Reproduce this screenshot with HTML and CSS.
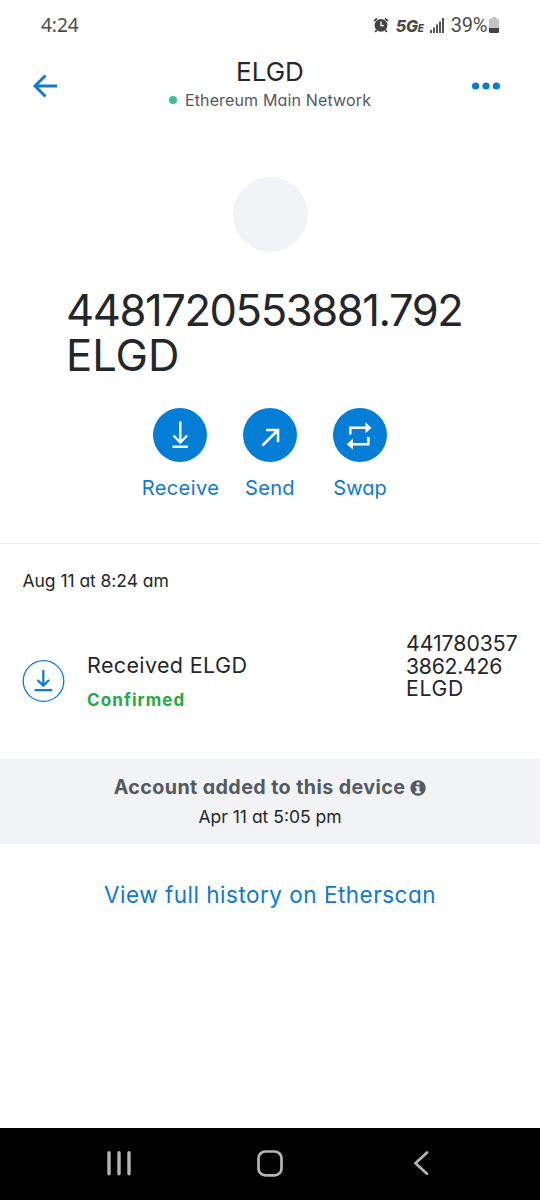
FILE: index.html
```html
<!DOCTYPE html>
<html lang="en">
<head>
<meta charset="utf-8">
<meta name="viewport" content="width=device-width">
<title>ELGD</title>
<link rel="stylesheet" href="styles.css">
</head>
<body>
<div class="screen">
  <div class="status">
    <span class="clock">4:24</span>
    <svg class="alarm" width="16" height="16" viewBox="0 0 16 16"><circle cx="8" cy="8.3" r="6.4" fill="#444"/><path d="M1 4.2 4 1.3M15 4.2 12 1.3M3.7 13 2.2 15M12.3 13 13.8 15" stroke="#444" stroke-width="1.8"/><path d="M8 4.6V8.6H11" fill="none" stroke="#fff" stroke-width="1.3"/></svg>
    <span class="net">5G<small>E</small></span>
    <svg class="signal" width="14" height="15" viewBox="0 0 14 15" fill="#555"><path d="M0 12h2v3H0zM3 9.500h2V15H3zM6 6.500h2V15H6zM9 3.500h2V15H9zM12 0h2v15h-2z"/></svg>
    <span class="percent">39%</span>
    <svg class="battery" width="10" height="16" viewBox="0 0 10 16"><path d="M3 0h4v1.500h1.500q1.500 0 1.500 1.500V11H0V3q0-1.500 1.500-1.500H3z" fill="#c4c4c4"/><path d="M0 11h10v3.500q0 1.500-1.500 1.500h-7Q0 16 0 14.500z" fill="#444"/></svg>
  </div>
  <header class="header">
    <svg class="back" width="26" height="26" viewBox="0 0 26 26" fill="none" stroke="#1079cd" stroke-width="2.900"><path d="M13.500 2.500 3 13l10.500 10.500M3 13h22"/></svg>
    <div class="heading">
      <div class="title"><span>ELGD</span></div>
      <div class="network"><i class="dot"></i><span>Ethereum Main Network</span></div>
    </div>
    <svg class="more" width="28" height="8" viewBox="0 0 28 8" fill="#1079cd"><circle cx="3.600" cy="4" r="3.600"/><circle cx="14" cy="4" r="3.600"/><circle cx="24.400" cy="4" r="3.600"/></svg>
  </header>
  <div class="token"></div>
  <div class="balance"><span class="digits">4481720553881.792</span><span class="symbol">ELGD</span></div>
  <div class="actions">
    <div class="action">
      <svg width="54" height="54" viewBox="0 0 54 54"><circle cx="27" cy="27" r="27" fill="#037dd6"/><path d="M27.300 13.500V34M20.500 27.500l6.800 7 6.800-7M19.500 38.700h15.500" fill="none" stroke="#fff" stroke-width="2.400"/></svg>
      <span class="receive">Receive</span>
    </div>
    <div class="action">
      <svg width="54" height="54" viewBox="0 0 54 54"><circle cx="27" cy="27" r="27" fill="#037dd6"/><path d="M19.500 37.500 34.500 22.500M23 22h12v12.300" fill="none" stroke="#fff" stroke-width="2.600"/></svg>
      <span class="send">Send</span>
    </div>
    <div class="action">
      <svg width="54" height="54" viewBox="0 0 54 54"><circle cx="27" cy="27" r="27" fill="#037dd6"/><path d="M17.300 26.500V19.700H33M35.300 29v7.200H20" fill="none" stroke="#fff" stroke-width="2.600"/><path d="M32.500 14.300 38.500 19.700 32.500 25.300zM20 30.500 13.700 36.200 20 41.700z" fill="#fff"/></svg>
      <span class="swap">Swap</span>
    </div>
  </div>
  <div class="date"><span>Aug 11 at 8:24 am</span></div>
  <div class="transaction">
    <svg class="received" width="43" height="42" viewBox="0 0 43 42" fill="none" stroke="#037dd6"><circle cx="21.500" cy="21" r="20.300" stroke-width="1.300"/><path d="M21.300 10v15.500M15.500 20l5.800 5.800 5.800-5.800M12.500 30.200h17.800" stroke-width="2.200"/></svg>
    <div class="details"><div class="kind"><span>Received ELGD</span></div><div class="confirmed"><span>Confirmed</span></div></div>
    <div class="amount"><span class="a1">441780357</span><span class="a2">3862.426</span><span class="a3">ELGD</span></div>
  </div>
  <div class="account">
    <div class="added"><span>Account added to this device</span><svg width="16" height="16" viewBox="0 0 16 16"><circle cx="8" cy="8" r="7.700" fill="#535a61"/><path d="M6.500 2.500h3v2.300h-3zM5.500 6.300h4v5h1.300v1.900H5.300v-1.900h1.200V8.100h-1z" fill="#f2f3f4"/></svg></div>
    <div class="when"><span>Apr 11 at 5:05 pm</span></div>
  </div>
  <div class="history"><span>View full history on Etherscan</span></div>
  <nav class="navbar">
    <svg width="26" height="26" viewBox="0 0 26 26" stroke="#b4b4b4" stroke-width="3.400" stroke-linecap="round"><path d="M3 2.700v21M13 2.700v21M23 2.700v21"/></svg>
    <svg width="26" height="27" viewBox="0 0 26 27" fill="none" stroke="#b4b4b4" stroke-width="2.700"><rect x="1.500" y="1.500" width="23" height="23.800" rx="6.800"/></svg>
    <svg width="26" height="26" viewBox="0 0 26 26" fill="none" stroke="#b4b4b4" stroke-width="2.700" stroke-linecap="round"><path d="M19 2.500 7.500 13.300 19 23.800"/></svg>
  </nav>
</div>
</body>
</html>
```
FILE: styles.css
```css
* { box-sizing: border-box; }
body { margin: 0; background: #fff; color: #24272a; font-family: Inter, "Open Sans", sans-serif; font-feature-settings: "cv11"; }
svg { display: block; flex: none; }
span { white-space: nowrap; }
.screen { width: 540px; height: 1200px; display: flex; flex-direction: column; overflow: hidden; }

.status { height: 50px; display: flex; align-items: center; padding: 0 41px; color: #4b4b4b; font: 20px/50px Roboto, sans-serif; }
.clock { font-family: "Noto Sans", sans-serif; font-size: 19px; }
.alarm { margin-left: auto; }
.net { margin-left: 7px; font: italic 800 16px/50px Inter, sans-serif; letter-spacing: -0.2px; padding-top: 4px; }
.net small { font-size: 10px; }
.signal { margin-left: 6px; }
.percent { margin-left: 7px; letter-spacing: -0.3px; }
.battery { margin-left: 2px; }

.header { height: 70px; display: flex; justify-content: space-between; align-items: flex-start; padding: 0 40px 0 32px; }
.back { margin-top: 23px; }
.more { margin-top: 32px; }
.heading { width: 280px; margin-left: 10px; padding-top: 7px; text-align: center; }
.title { font-size: 26px; line-height: 30px; }
.network { display: flex; align-items: center; justify-content: center; gap: 8px; font-size: 16px; line-height: 26px; letter-spacing: 0.150px; color: #535a61; }
.dot { width: 8px; height: 8px; border-radius: 50%; background: #3cbe92; }

.token { width: 75px; height: 75px; margin: 56.500px auto 0; border-radius: 50%; background: #f2f3f6; flex: none; }
.balance { margin: 36.500px 0 0 66px; font-size: 43.500px; line-height: 45px; height: 90px; flex: none; }
.balance span, .amount span { display: block; }
.digits { letter-spacing: -1.400px; }

.actions { display: flex; justify-content: center; height: 166px; padding-top: 30px; border-bottom: 1px solid #eff1f3; flex: none; }
.action { width: 90px; display: flex; flex-direction: column; align-items: center; gap: 11px; color: #1079cd; font-size: 20px; line-height: 30px; }
.receive { letter-spacing: 0.4px; margin-left: 1px; }
.send { letter-spacing: 0.3px; }

.date { padding: 22px 0 0 22.500px; font-size: 17.500px; line-height: 30px; letter-spacing: -0.050px; }
.transaction { display: flex; height: 163px; padding: 36px 0 0 22px; flex: none; }
.received { margin-top: 28px; }
.details { flex: 1; padding: 18px 0 0 22px; }
.kind { font-size: 21.500px; line-height: 30px; letter-spacing: 0.370px; }
.confirmed { margin-top: 5px; font-size: 17px; line-height: 30px; font-weight: 700; letter-spacing: 1.100px; color: #28a745; }
.amount { width: 134px; font-size: 21.200px; line-height: 22.500px; }
.a2 { letter-spacing: -0.250px; }
.a3 { letter-spacing: 0.700px; }

.account { height: 85px; padding-top: 14px; background: #f2f3f5; text-align: center; flex: none; }
.added { display: flex; align-items: center; justify-content: center; gap: 5px; font-size: 19.700px; line-height: 29px; font-weight: 700; letter-spacing: 0.400px; color: #535a61; }
.when { font-size: 17.500px; line-height: 30px; }
.history { margin-top: 36px; text-align: center; font-size: 22.500px; line-height: 30px; letter-spacing: 0.500px; color: #1079cd; }

.navbar { margin-top: auto; height: 72px; display: flex; justify-content: center; gap: 125px; padding-top: 22px; background: #000; }
```
